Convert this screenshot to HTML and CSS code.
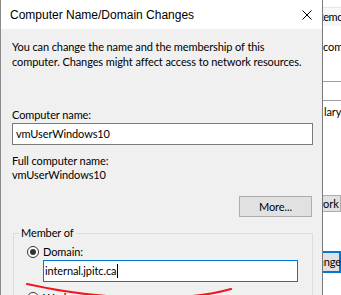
FILE: index.html
```html
<!DOCTYPE html>
<html lang="en">
<head>
  <meta charset="UTF-8">
  <title>Computer Name/Domain Changes</title>
  <link rel="stylesheet" href="styles.css">
</head>
<body>

  <div class="desktop">
    <div class="dialog">
      <div class="titlebar">
        <span class="title">Computer Name/Domain Changes</span>
        <svg class="close" width="10" height="10" viewBox="0 0 10 10">
          <path d="M0.5 0.5 L9.5 9.5 M9.5 0.5 L0.5 9.5" stroke="#000" stroke-width="1" fill="none"/>
        </svg>
      </div>

      <div class="content">
        <p class="intro">You can change the name and the membership of this<br>computer. Changes might affect access to network resources.</p>

        <div class="label first">Computer name:</div>
        <div class="field">vmUserWindows10</div>

        <div class="label full">Full computer name:</div>
        <div class="value">vmUserWindows10</div>

        <div class="actions">
          <button class="btn">More...</button>
        </div>

        <fieldset class="group">
          <legend>Member of</legend>
          <div class="radio-row"><span class="radio checked"></span>Domain:</div>
          <div class="field active">internal.jpitc.ca<span class="caret"></span></div>
          <div class="radio-row next"><span class="radio"></span>Workgroup:</div>
        </fieldset>
      </div>
    </div>

    <div class="behind">
      <div class="b-head">Remote</div>
      <div class="b-text">computer</div>
      <div class="b-rule one"></div>
      <div class="b-rule two"></div>
      <div class="b-text lary">lary's</div>
      <div class="b-btn">Network ID...</div>
      <div class="b-btn focus">Change...</div>
    </div>
  </div>

  <!-- red pen mark drawn over the screenshot -->
  <svg class="ink" width="341" height="295" viewBox="0 0 341 295">
    <path d="M27 284 C 80 296, 170 306, 231 289" stroke="#f2161e" stroke-width="2.2" fill="none" stroke-linecap="round"/>
  </svg>

</body>
</html>
```

FILE: styles.css
```css
body {
  margin: 0;
  font-family: Lato, "Liberation Sans", sans-serif;
  font-size: 11px;
  letter-spacing: -0.1px;
  color: #000;
  background: #fff;
  overflow: hidden;
  position: relative;
}

.desktop {
  display: flex;
  height: 295px;
  overflow: hidden;
}

.dialog {
  width: 323px;
  flex: none;
  box-sizing: border-box;
  border-left: 1px solid #8a8a8a;
  border-right: 1px solid #7a7a7a;
  background: #f0f0f0;
}

.titlebar {
  height: 29px;
  background: #fff;
  display: flex;
  align-items: center;
  justify-content: space-between;
  padding: 0 10px 0 9px;
}

.title {
  font-family: "Liberation Sans", Arial, sans-serif;
  font-size: 12px;
  letter-spacing: 0;
}

.close {
  display: block;
}

.content {
  padding: 10px 9px 0 11px;
}

.intro {
  margin: 0;
  line-height: 15px;
  white-space: nowrap;
}

.label {
  line-height: 15px;
}

.label.first {
  margin-top: 38px;
}

.label.full {
  margin-top: 9px;
  line-height: 14px;
}

.value {
  line-height: 14px;
}

.field {
  margin-top: 1px;
  height: 22px;
  box-sizing: border-box;
  border: 1px solid #7a7a7a;
  background: #fff;
  padding: 0 3px;
  line-height: 20px;
  white-space: nowrap;
}

.field.active {
  margin-left: 24px;
  width: 255px;
  padding-left: 1px;
  border-color: #0078d7;
}

.caret {
  display: inline-block;
  width: 1px;
  height: 14px;
  background: #000;
  vertical-align: -3px;
  margin-left: 1px;
}

.actions {
  display: flex;
  justify-content: flex-end;
  margin-top: 14px;
  padding-right: 1px;
}

.btn {
  width: 73px;
  height: 21px;
  padding: 0;
  border: 1px solid #adadad;
  background: #e1e1e1;
  font: inherit;
  letter-spacing: inherit;
  color: #000;
}

.group {
  margin: 9px 0 0 1px;
  padding: 0 5px 10px;
  border: 1px solid #dcdcdc;
}

.group legend {
  padding: 0 2px;
  line-height: 14px;
}

.radio-row {
  display: flex;
  align-items: center;
  margin: 4px 0 0 8px;
  line-height: 15px;
}

.radio-row.next {
  margin-top: 8px;
}

.radio {
  width: 12px;
  height: 12px;
  box-sizing: border-box;
  border: 1px solid #333;
  border-radius: 50%;
  background: #fff;
  margin-right: 4px;
  display: flex;
  align-items: center;
  justify-content: center;
}

.radio.checked::after {
  content: "";
  width: 6px;
  height: 6px;
  border-radius: 50%;
  background: #333;
}

.behind {
  flex: 1;
  background: #fff;
  overflow: hidden;
  white-space: nowrap;
}

.b-head {
  margin-top: 7px;
  height: 19px;
  box-sizing: border-box;
  border-top: 1px solid #e5e5e5;
  background: #f7f7f7;
  line-height: 18px;
  letter-spacing: -0.4px;
  text-indent: -6px;
}

.b-text {
  margin-top: 13px;
  line-height: 15px;
}

.b-rule {
  border-top: 1px solid #a0a0a0;
}

.b-rule.one {
  margin-top: 27px;
}

.b-rule.two {
  margin-top: 18px;
}

.b-text.lary {
  margin-top: 3px;
  padding-left: 1px;
}

.b-btn {
  margin-top: 76px;
  height: 17px;
  box-sizing: border-box;
  border: 1px solid #adadad;
  border-left: none;
  background: #e1e1e1;
  line-height: 15px;
  text-indent: -26px;
}

.b-btn.focus {
  margin-top: 39px;
  height: 22px;
  border: 2px solid #0078d7;
  border-left: none;
  line-height: 18px;
  text-indent: -18px;
}

.ink {
  position: absolute;
  left: 0;
  top: 0;
  pointer-events: none;
}
```
